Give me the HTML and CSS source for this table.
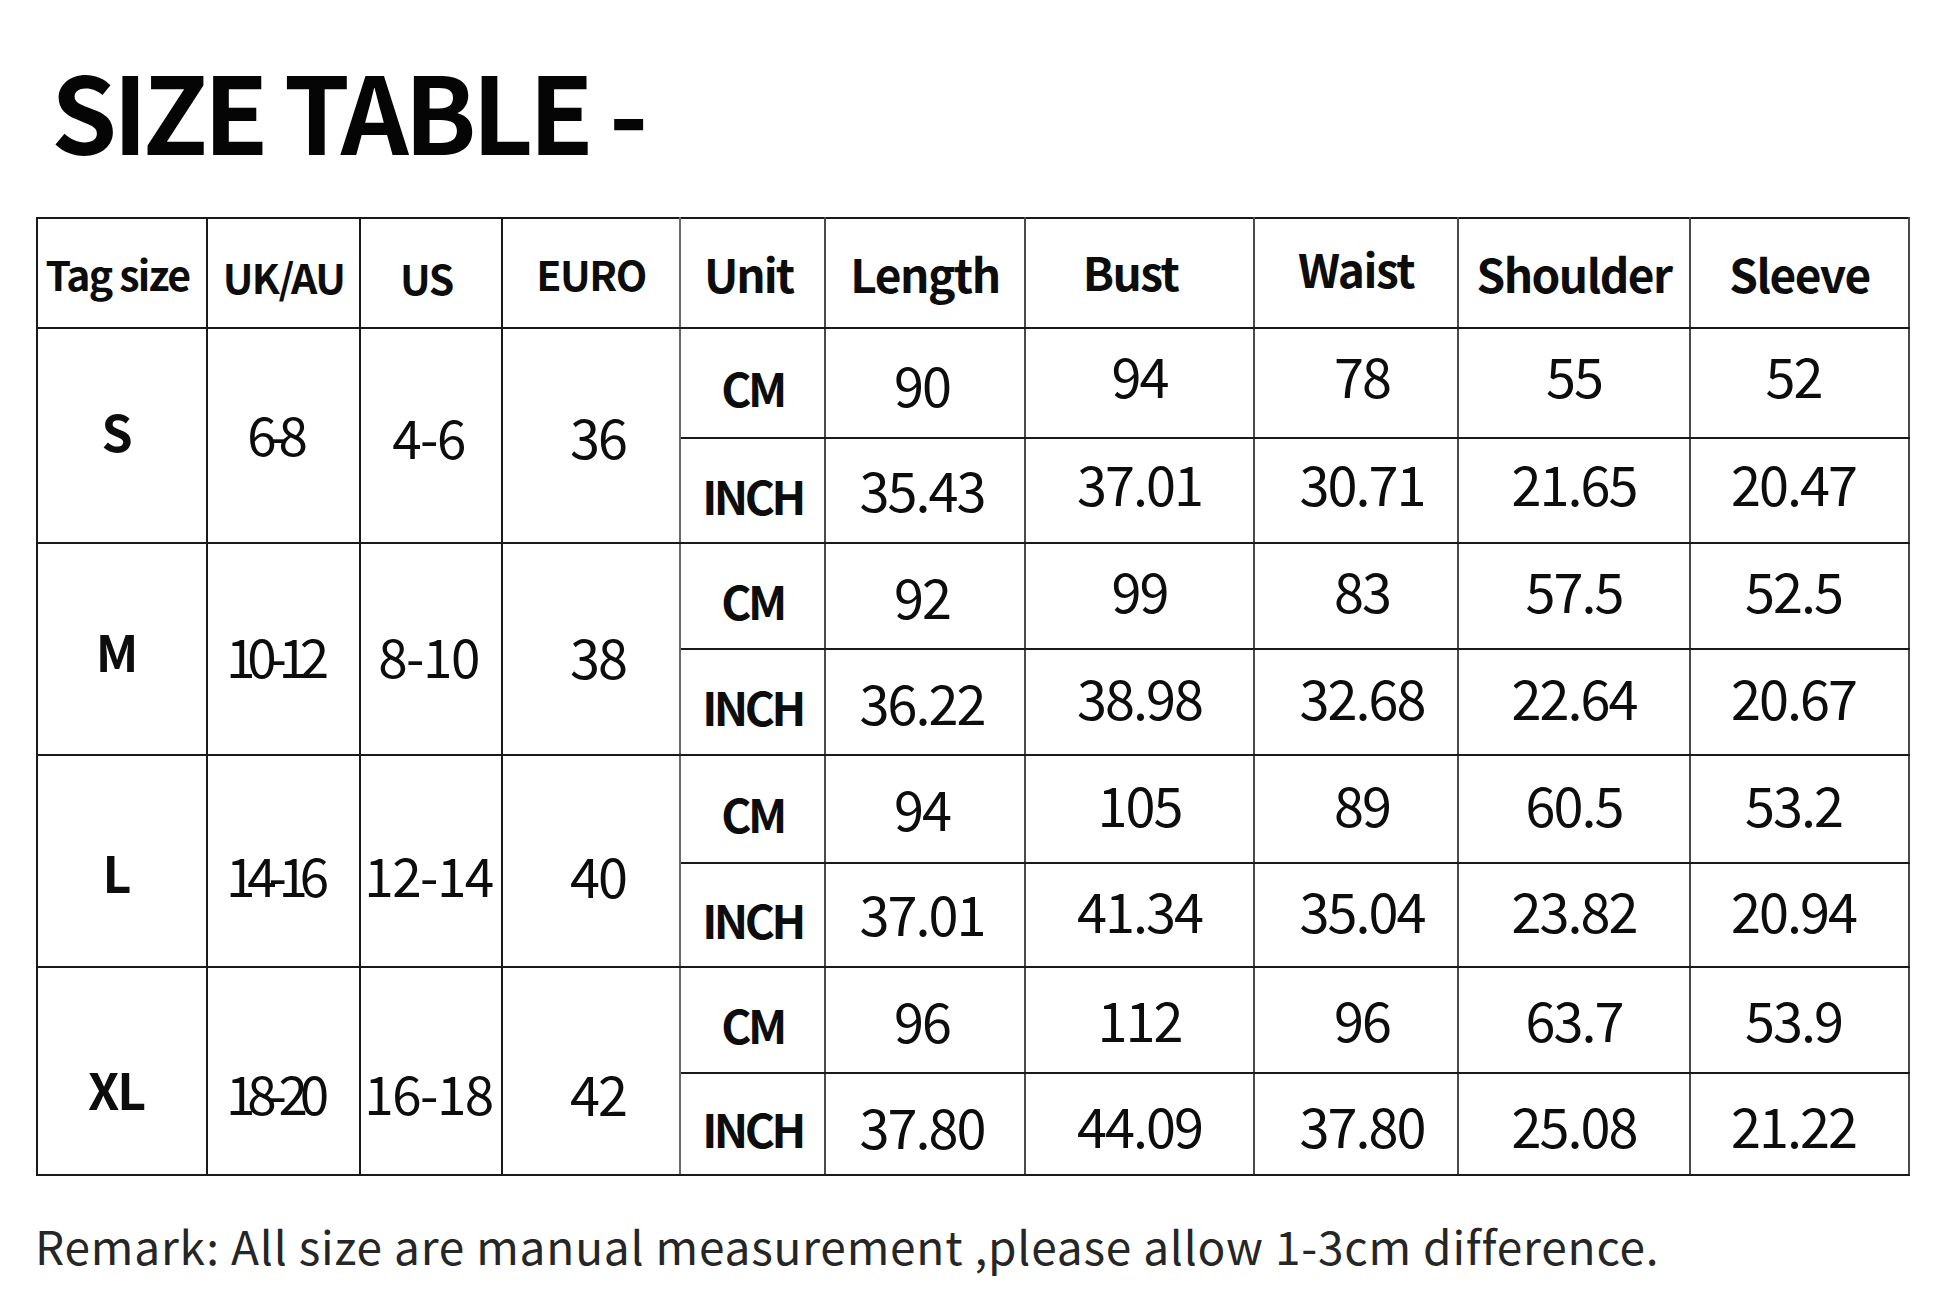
FILE: index.html
```html
<!DOCTYPE html>
<html lang="en">
<head>
<meta charset="utf-8">
<title>Size Table</title>
<link rel="stylesheet" href="styles.css">
</head>
<body>
<main class="page">
  <h1 class="title">SIZE TABLE -</h1>
  <table class="size-table">
    <colgroup>
      <col class="c-tag"><col class="c-uk"><col class="c-us"><col class="c-eu"><col class="c-unit">
      <col class="c-len"><col class="c-bust"><col class="c-waist"><col class="c-sh"><col class="c-sl">
    </colgroup>
    <thead>
      <tr class="r0">
        <th class="hs tag-h">Tag size</th>
        <th class="hs">UK/AU</th>
        <th class="hs us-h">US</th>
        <th class="hs eu eu-h">EURO</th>
        <th class="hl gray unit-h">Unit</th>
        <th class="hl gray">Length</th>
        <th class="hl gray bust-h">Bust</th>
        <th class="hl gray waist-h">Waist</th>
        <th class="hl gray">Shoulder</th>
        <th class="hl gray">Sleeve</th>
      </tr>
    </thead>
    <tbody>
      <tr class="r1 grp-s">
        <td rowspan="2" class="tag">S</td>
        <td rowspan="2" class="uk">6-8</td>
        <td rowspan="2" class="us">4-6</td>
        <td rowspan="2" class="eu eun">36</td>
        <td class="unit gray">CM</td>
        <td class="num gray len">90</td><td class="num gray m">94</td><td class="num gray m waist">78</td><td class="num gray m">55</td><td class="num gray m slv">52</td>
      </tr>
      <tr class="r2">
        <td class="unit gray">INCH</td>
        <td class="num gray len">35.43</td><td class="num gray m">37.01</td><td class="num gray m waist">30.71</td><td class="num gray m">21.65</td><td class="num gray m slv">20.47</td>
      </tr>
      <tr class="r3 grp-m">
        <td rowspan="2" class="tag">M</td>
        <td rowspan="2" class="uk">10-12</td>
        <td rowspan="2" class="us">8-10</td>
        <td rowspan="2" class="eu eun">38</td>
        <td class="unit gray">CM</td>
        <td class="num gray len">92</td><td class="num gray m">99</td><td class="num gray m waist">83</td><td class="num gray m">57.5</td><td class="num gray m slv">52.5</td>
      </tr>
      <tr class="r4">
        <td class="unit gray">INCH</td>
        <td class="num gray len">36.22</td><td class="num gray m">38.98</td><td class="num gray m waist">32.68</td><td class="num gray m">22.64</td><td class="num gray m slv">20.67</td>
      </tr>
      <tr class="r5 grp-l">
        <td rowspan="2" class="tag">L</td>
        <td rowspan="2" class="uk">14-16</td>
        <td rowspan="2" class="us">12-14</td>
        <td rowspan="2" class="eu eun">40</td>
        <td class="unit gray">CM</td>
        <td class="num gray len">94</td><td class="num gray m">105</td><td class="num gray m waist">89</td><td class="num gray m">60.5</td><td class="num gray m slv">53.2</td>
      </tr>
      <tr class="r6">
        <td class="unit gray">INCH</td>
        <td class="num gray len">37.01</td><td class="num gray m">41.34</td><td class="num gray m waist">35.04</td><td class="num gray m">23.82</td><td class="num gray m slv">20.94</td>
      </tr>
      <tr class="r7 grp-xl">
        <td rowspan="2" class="tag">XL</td>
        <td rowspan="2" class="uk">18-20</td>
        <td rowspan="2" class="us">16-18</td>
        <td rowspan="2" class="eu eun">42</td>
        <td class="unit gray">CM</td>
        <td class="num gray len">96</td><td class="num gray m">112</td><td class="num gray m waist">96</td><td class="num gray m">63.7</td><td class="num gray m slv">53.9</td>
      </tr>
      <tr class="r8">
        <td class="unit gray">INCH</td>
        <td class="num gray len">37.80</td><td class="num gray m">44.09</td><td class="num gray m waist">37.80</td><td class="num gray m">25.08</td><td class="num gray m slv">21.22</td>
      </tr>
    </tbody>
  </table>
  <p class="remark">Remark: All size are manual measurement ,please allow 1-3cm difference.</p>
</main>
</body>
</html>
```
FILE: styles.css
```css
html, body {
  margin: 0;
  padding: 0;
  background: #ffffff;
}

th, td {
  padding: 0;
}

.page {
  font-family: "Noto Sans CJK SC", "Noto Sans", sans-serif;
  color: #0d0d0d;
  padding-top: 1px;
}

.title {
  margin: 0;
  margin-top: 33px;
  padding-left: 51px;
  font-size: 106px;
  line-height: 150px;
  height: 150px;
  font-weight: 700;
  letter-spacing: -4.5px;
  color: #050505;
}

.size-table {
  margin-left: 36px;
  margin-top: 33px;
  border-collapse: collapse;
  table-layout: fixed;
  width: 1872px;
}

.c-tag { width: 170px; }
.c-uk { width: 153px; }
.c-us { width: 142px; }
.c-eu { width: 178px; }
.c-unit { width: 145px; }
.c-len { width: 200px; }
.c-bust { width: 229px; }
.c-waist { width: 204px; }
.c-sh { width: 232px; }
.c-sl { width: 219px; }

.size-table th,
.size-table td {
  border: 2px solid #1a1a1a;
  text-align: center;
  vertical-align: middle;
  white-space: nowrap;
  overflow: visible;
}

.size-table .gray {
  border-left-color: #6a6a6a;
  border-right-color: #4a4a4a;
}

.size-table .eu {
  border-right-color: #6a6a6a;
}

/* row heights */
.r0 { height: 110px; }
.r1 { height: 110px; }
.r2 { height: 105px; }
.r3 { height: 106px; }
.r4 { height: 106px; }
.r5 { height: 108px; }
.r6 { height: 104px; }
.r7 { height: 106px; }
.r8 { height: 102px; }

/* header */
.hs {
  font-size: 41px;
  font-weight: 700;
  letter-spacing: -1.5px;
  padding-top: 6px;
}

.tag-h {
  letter-spacing: -1.7px;
  padding-top: 0;
  padding-right: 9px;
}

.us-h {
  padding-top: 8px;
  padding-right: 9px;
}

.eu-h {
  padding-top: 0;
}

.hl {
  font-size: 46px;
  font-weight: 700;
  letter-spacing: -1.5px;
}

.unit-h {
  padding-right: 8px;
  letter-spacing: -2px;
}

.bust-h {
  padding-right: 18px;
  padding-bottom: 4px;
}

.waist-h {
  padding-bottom: 10px;
}

/* size group columns */
.tag {
  font-size: 50px;
  font-weight: 700;
  letter-spacing: -2px;
  padding-right: 12px;
  padding-bottom: 12px;
}

.uk {
  font-size: 53px;
  font-weight: 400;
  letter-spacing: -8.2px;
  text-indent: -8px;
  padding-right: 12px;
}

.us {
  font-size: 53px;
  font-weight: 400;
  letter-spacing: -1.5px;
  padding-right: 5px;
}

.eun {
  font-size: 54px;
  font-weight: 400;
  letter-spacing: -2px;
  padding-left: 14px;
}

.grp-s .uk { padding-bottom: 5px; }

.grp-m .uk, .grp-m .us, .grp-m .eun { padding-top: 12px; }
.grp-l .uk, .grp-l .us, .grp-l .eun { padding-top: 26px; }
.grp-xl .uk, .grp-xl .us, .grp-xl .eun { padding-top: 42px; }

.grp-m .tag { padding-top: 14px; }
.grp-l .tag { padding-top: 31px; }
.grp-xl .tag { padding-top: 46px; }

/* measurement columns */
.num {
  font-size: 54px;
  font-weight: 400;
  letter-spacing: -2px;
}

.num.len { padding-right: 6px; }
.num.waist { padding-left: 12px; }
.num.slv { padding-right: 12px; }

.r1 .m { padding-bottom: 17px; }
.r2 .m { padding-bottom: 16px; }
.r3 .m { padding-bottom: 14px; }
.r4 .m { padding-bottom: 12px; }
.r5 .m { padding-bottom: 12px; }
.r6 .m { padding-bottom: 12px; }
.r7 .m { padding-bottom: 4px; }

.r2 .len { padding-bottom: 4px; }
.r3 .len { padding-bottom: 2px; }
.r4 .len { padding-bottom: 2px; }
.r5 .len { padding-bottom: 4px; }
.r6 .len { padding-bottom: 6px; }
.r7 .len { padding-bottom: 2px; }
.r8 .len { padding-top: 2px; }

.unit {
  font-size: 46px;
  font-weight: 700;
  letter-spacing: -3.5px;
  padding-top: 8px;
}

.remark {
  margin: 0;
  margin-top: 34px;
  padding-left: 35px;
  font-size: 46px;
  line-height: 70px;
  color: #262626;
  letter-spacing: 0.8px;
}
```
